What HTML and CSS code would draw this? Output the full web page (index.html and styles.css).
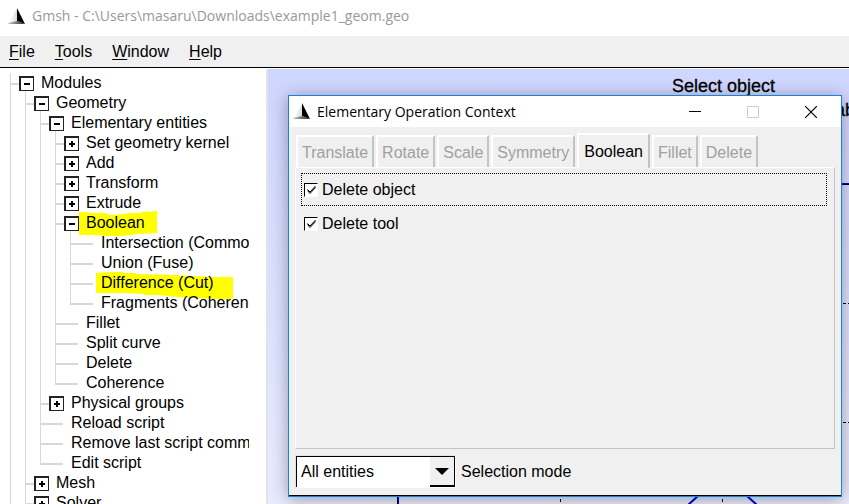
FILE: index.html
```html
<!DOCTYPE html>
<html lang="en">
<head>
<meta charset="utf-8">
<title>Gmsh</title>
<link rel="stylesheet" href="styles.css">
</head>
<body>
<svg class="defs" width="0" height="0" aria-hidden="true">
  <defs>
    <linearGradient id="sail" x1="0" y1="0" x2="1" y2="0"><stop offset="0" stop-color="#ffffff"/><stop offset="1" stop-color="#dcdcdc"/></linearGradient>
    <linearGradient id="base" x1="0" y1="0" x2="1" y2="0"><stop offset="0" stop-color="#c8c8c8"/><stop offset="1" stop-color="#222222"/></linearGradient>
    <symbol id="logo" viewBox="0 0 18 17">
      <path d="M9 1 1 15l8-2z" fill="url(#sail)"/>
      <path d="M9 0v13l8 3z" fill="#000"/>
      <path d="M0 15l9-2 8 3H1z" fill="url(#base)"/>
    </symbol>
  </defs>
</svg>
<div class="app">
  <header class="titlebar">
    <svg class="logo"><use href="#logo"/></svg>
    <span>Gmsh - C:\Users\masaru\Downloads\example1_geom.geo</span>
  </header>
  <nav class="menubar">
    <button type="button"><u>F</u>ile</button>
    <button type="button"><u>T</u>ools</button>
    <button type="button"><u>W</u>indow</button>
    <button type="button"><u>H</u>elp</button>
  </nav>
  <main class="work">
    <aside class="side">
      <ul class="tree">
        <li class="open"><div class="row"><button class="box minus" type="button" aria-label="Collapse"></button>Modules</div>
          <ul>
            <li><div class="row"><button class="box minus" type="button" aria-label="Collapse"></button>Geometry</div>
              <ul>
                <li><div class="row"><button class="box minus" type="button" aria-label="Collapse"></button>Elementary entities</div>
                  <ul>
                    <li><div class="row"><button class="box plus" type="button" aria-label="Expand"></button>Set geometry kernel</div></li>
                    <li><div class="row"><button class="box plus" type="button" aria-label="Expand"></button>Add</div></li>
                    <li><div class="row"><button class="box plus" type="button" aria-label="Expand"></button>Transform</div></li>
                    <li><div class="row"><button class="box plus" type="button" aria-label="Expand"></button>Extrude</div></li>
                    <li><div class="row"><svg class="marker" width="78" height="25" aria-hidden="true"><path d="M0 1h10v1h16l5 2h7l2-1h8V2h15V1l15-1v22l-20 1-15 2H28l-12-1H0z" fill="#ff0"/></svg><button class="box minus" type="button" aria-label="Collapse"></button>Boolean</div>
                      <ul>
                        <li><div class="row leaf">Intersection (Common)</div></li>
                        <li><div class="row leaf">Union (Fuse)</div></li>
                        <li><div class="row leaf"><svg class="marker" width="138" height="28" aria-hidden="true"><path d="M0 1l13-1h14v1h13v1l38 1 22 1 18 1h19v22h-18l-18-1-20-1-19-2H48v-1l-19-1H0z" fill="#ff0"/></svg>Difference (Cut)</div></li>
                        <li><div class="row leaf">Fragments (Coherence)</div></li>
                      </ul>
                    </li>
                    <li><div class="row leaf">Fillet</div></li>
                    <li><div class="row leaf">Split curve</div></li>
                    <li><div class="row leaf">Delete</div></li>
                    <li><div class="row leaf">Coherence</div></li>
                  </ul>
                </li>
                <li><div class="row"><button class="box plus" type="button" aria-label="Expand"></button>Physical groups</div></li>
                <li><div class="row leaf">Reload script</div></li>
                <li><div class="row leaf">Remove last script command</div></li>
                <li><div class="row leaf">Edit script</div></li>
              </ul>
            </li>
            <li><div class="row"><button class="box plus" type="button" aria-label="Expand"></button>Mesh</div></li>
            <li class="open"><div class="row"><button class="box plus" type="button" aria-label="Expand"></button>Solver</div></li>
          </ul>
        </li>
      </ul>
    </aside>
    <section class="canvas">
      <svg class="drawing" width="700" height="440" fill="none" aria-hidden="true">
        <path d="M130 115.500H700" stroke="#000"/>
        <path d="M130 114.500H700M130.500 115V440" stroke="#0000e6" />
        <path d="M129.500 115V440" stroke="#000"/>
        <path d="M40 234.500H700M40 353.500H700M292.500 60V440M454.500 60V440" stroke="#000" stroke-dasharray="3 2"/>
        <path d="M430 427l-10 9M479 427l10 9" stroke="#0000d8" stroke-width="2"/>
      </svg>
      <span class="hint hint-main">Select object</span>
      <span class="hint hint-keys">ab</span>
    </section>
  </main>
</div>

<section class="dialog" role="dialog" aria-labelledby="dialog-title">
  <header class="dialog-title">
    <svg class="logo"><use href="#logo"/></svg>
    <h1 id="dialog-title">Elementary Operation Context</h1>
    <div class="controls">
      <button type="button" aria-label="Minimize"><svg width="12" height="12"><path d="M0 5.500h12" stroke="#000"/></svg></button>
      <button type="button" aria-label="Maximize" disabled><svg width="12" height="12"><path d="M.5.5h11v11H.5z" fill="none" stroke="#ccc"/></svg></button>
      <button type="button" aria-label="Close"><svg width="12" height="12"><path d="M0 0l12 12M12 0L0 12" stroke="#000" stroke-width="1.200"/></svg></button>
    </div>
  </header>
  <div class="dialog-body">
    <div class="tabs" role="tablist">
      <button type="button" role="tab" disabled>Translate</button>
      <button type="button" role="tab" disabled>Rotate</button>
      <button type="button" role="tab" disabled>Scale</button>
      <button type="button" role="tab" disabled>Symmetry</button>
      <button type="button" role="tab" class="active" aria-selected="true">Boolean</button>
      <button type="button" role="tab" disabled>Fillet</button>
      <button type="button" role="tab" disabled>Delete</button>
    </div>
    <div class="panel" role="tabpanel">
      <label class="check focused"><span class="tick"><input type="checkbox" checked><svg viewBox="0 0 9 9" width="9" height="9"><path d="M.5 4.500 3 7l5.500-6M.5 5.500 3 8.500l5.500-6" fill="none" stroke="#000"/></svg></span>Delete object</label>
      <label class="check"><span class="tick"><input type="checkbox" checked><svg viewBox="0 0 9 9" width="9" height="9"><path d="M.5 4.500 3 7l5.500-6M.5 5.500 3 8.500l5.500-6" fill="none" stroke="#000"/></svg></span>Delete tool</label>
    </div>
    <div class="mode">
      <span class="combo">
        <select id="mode"><option>All entities</option></select>
        <span class="arrow"><svg width="14" height="7"><path d="M0 0h14L7 7z"/></svg></span>
      </span>
      <label for="mode">Selection mode</label>
    </div>
  </div>
</section>
</body>
</html>
```
FILE: styles.css
```css
* { box-sizing: border-box; }
html, body { height: 100%; }
body {
  margin: 0;
  overflow: hidden;
  background: #fff;
  color: #000;
  font: 16px/20px "Liberation Sans", Arial, sans-serif;
}
button, select, input { font: inherit; color: inherit; margin: 0; padding: 0; border: 0; background: none; border-radius: 0; }
ul { list-style: none; margin: 0; padding: 0; }
.defs { position: absolute; }

.app { display: flex; flex-direction: column; height: 100vh; }
.logo { width: 18px; height: 17px; flex: none; }
.titlebar {
  display: flex;
  align-items: center;
  gap: 6px;
  height: 36px;
  flex: none;
  padding: 0 8px 4px;
  color: #999;
  font: 14px/20px "Open Sans", "Noto Sans", sans-serif;
}
.menubar {
  display: flex;
  gap: 20px;
  flex: none;
  height: 32px;
  padding: 0 9px;
  background: #f0f0f0;
  border-bottom: 1px solid #000;
}
.menubar u { text-underline-offset: 2px; text-decoration-thickness: 1px; text-decoration-skip-ink: none; }
.work { display: flex; flex: 1; min-height: 0; padding-top: 1px; }

.side {
  flex: none;
  width: 268px;
  padding: 4px 17px 0 10px;
  border-right: 2px solid #e3e3e3;
  overflow: hidden;
}
.tree { isolation: isolate; overflow: hidden; white-space: nowrap; }
.tree ul { margin-left: 15px; }
.tree li { position: relative; }
.tree li::before {
  content: "";
  position: absolute;
  z-index: -2;
  top: -2px;
  bottom: 0;
  left: 0;
  width: 1px;
  background: #d8d8d8;
}
.tree li:last-child:not(.open)::before { bottom: auto; height: 13px; }
.row { position: relative; display: flex; align-items: center; height: 20px; }
.row::before { content: ""; flex: none; width: 9px; height: 2px; margin-top: 1px; background: #d8d8d8; }
.row.leaf::before { width: 23px; margin-right: 8px; }
.box {
  flex: none;
  width: 15px;
  height: 15px;
  margin: 1px 7px 0 0;
  border: 1px solid #222;
  border-width: 2px 1px 1px 2px;
  background: linear-gradient(#000, #000) center / 6px 2px no-repeat #fff;
}
.box.plus { background: linear-gradient(#000, #000) center / 6px 2px no-repeat, linear-gradient(#000, #000) center / 2px 6px no-repeat #fff; }
.marker { position: absolute; z-index: -1; left: 24px; top: -2px; }
.leaf .marker { left: 26px; top: -1px; }

.canvas {
  position: relative;
  flex: 1;
  min-width: 0;
  overflow: hidden;
  background: linear-gradient(#cfd6ff, #e9ebff);
}
.drawing { position: absolute; left: 0; top: 0; }
.hint { position: absolute; font-size: 18px; -webkit-text-stroke: 0.3px #000; }
.hint-main { left: 404px; top: 7px; }
.hint-keys { left: 567px; top: 31px; }

.dialog {
  position: absolute;
  left: 288px;
  top: 95px;
  width: 554px;
  border: 1px solid #1883d7;
  background: #f0f0f0;
  box-shadow: 0 2px 16px rgba(0, 0, 0, 0.35);
}
.dialog-title { display: flex; align-items: center; gap: 6px; height: 31px; padding-left: 4px; background: #fff; }
.dialog-title h1 { margin: 0; font: 14px/20px "Open Sans", "Noto Sans", sans-serif; }
.controls { display: flex; gap: 46px; margin-left: auto; padding-right: 24px; }
.controls svg { display: block; }
.dialog-body { padding: 6px 6px 7px; border-bottom: 1px solid #000; }
.tabs { display: flex; align-items: flex-end; gap: 2px; height: 34px; padding-left: 1px; }
.tabs button {
  height: 32px;
  padding: 2px 4px 0;
  border: solid;
  border-width: 2px 2px 0 2px;
  border-color: #fff #c4c4c4 #fff #fff;
  color: #a0a0a0;
}
.tabs .active { height: 35px; margin-bottom: -1px; padding: 0 5px; color: #000; background: #f0f0f0; position: relative; }
.panel {
  height: 282px;
  padding: 5px;
  border: 1px solid;
  border-color: #fff #c4c4c4 #c4c4c4 #fff;
}
.check { display: flex; align-items: center; gap: 4px; height: 33px; margin: 0 2px 1px 0; padding-left: 2px; border: 1px solid transparent; }
.check.focused { border: 1px dotted #000; }
.tick { position: relative; width: 14px; height: 14px; }
.tick input {
  display: block;
  appearance: none;
  width: 14px;
  height: 14px;
  border: 1px solid;
  border-color: #000 #fff #fff #000;
  background: #fff;
}
.tick svg { position: absolute; left: 3px; top: 2px; pointer-events: none; }
.mode { display: flex; align-items: center; gap: 5px; padding-top: 6px; }
.combo { display: flex; width: 161px; height: 33px; border: 1px solid; border-color: #e0e0e0 #fff #fff #e0e0e0; position: relative; }
.combo select { appearance: none; flex: 1; padding: 0 30px 0 4px; border: 1px solid #000; border-width: 1px 1px 0 1px; background: #fff; }
.arrow {
  position: absolute;
  right: 1px;
  top: 1px;
  bottom: 0;
  width: 24px;
  display: flex;
  align-items: center;
  justify-content: center;
  background: #f0f0f0;
  border-bottom: 2px solid #000;
  pointer-events: none;
}
```
